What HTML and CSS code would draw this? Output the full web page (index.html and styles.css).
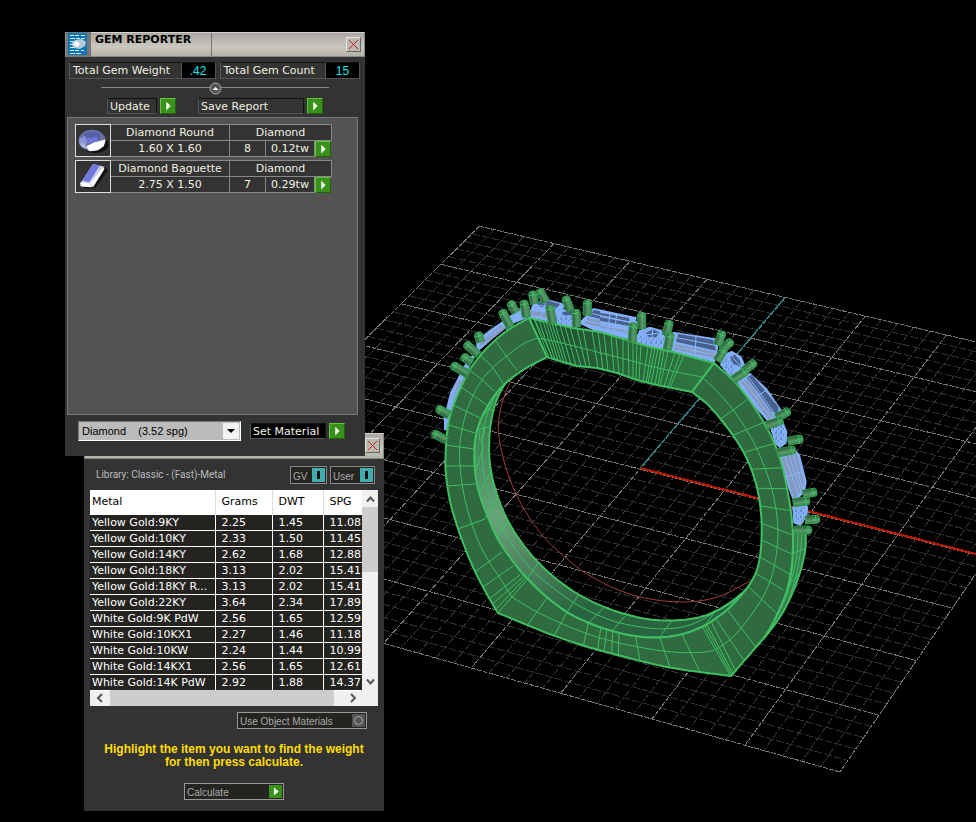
FILE: index.html
```html
<!DOCTYPE html>
<html lang="en">
<head>
<meta charset="utf-8">
<title>Gem Reporter</title>
<link rel="stylesheet" href="styles.css">
</head>
<body>
<main class="desktop">
<svg class="viewport" viewBox="0 0 976 822" preserveAspectRatio="xMinYMin meet" role="img" aria-label="Ring model in perspective view">
  <defs>
    <linearGradient id="metal" x1="0" y1="0" x2="0" y2="1"><stop offset="0" stop-color="#34834a"/><stop offset=".4" stop-color="#5b9a6d"/><stop offset="1" stop-color="#245a35"/></linearGradient>
    <linearGradient id="shine" gradientUnits="userSpaceOnUse" x1="485" y1="400" x2="580" y2="610"><stop offset="0" stop-color="#34794a"/><stop offset=".33" stop-color="#55966a"/><stop offset=".48" stop-color="#6aa37a"/><stop offset=".75" stop-color="#4b7f5b"/><stop offset="1" stop-color="#2a6340"/></linearGradient>
    <linearGradient id="band" gradientUnits="userSpaceOnUse" x1="530" y1="340" x2="710" y2="370"><stop offset="0" stop-color="#214b2f"/><stop offset="1" stop-color="#2f7942"/></linearGradient>
    <pattern id="facets" width="5" height="6" patternUnits="userSpaceOnUse"><path d="M0 1h2M3 3h1M1 5h1" stroke="#506b9b" stroke-width="1"/></pattern>
  </defs>
  <g id="grid" class="grid"></g>
  <path class="axis-y" d="M640 468L785 297"/>
  <path class="axis-x" d="M640 468L976 554"/>
  <path id="finger" class="finger"/>
  <g id="gems" class="gems"></g>
  <g id="ring" class="ring"></g>
  <g id="prongs"></g>
</svg>

<section class="window weights" aria-label="Metal weights">
  <header class="titlebar titlebar-back"><span class="title-gap"></span><button class="close" type="button" aria-label="Close"><svg viewBox="0 0 13 13"><path d="M2 2L11 11M11 2L2 11"/></svg></button></header>
  <div class="weights-body">
    <div class="library">
      <span class="library-name">Library: Classic - (Fast)-Metal</span>
      <button class="toggle" type="button">GV<i class="on"></i></button>
      <button class="toggle" type="button">User<i class="on"></i></button>
    </div>
    <div class="list">
      <div class="list-main">
        <table>
          <colgroup><col class="c1"><col class="c2"><col class="c3"><col class="c4"></colgroup>
          <thead><tr><th>Metal</th><th>Grams</th><th>DWT</th><th>SPG</th></tr></thead>
          <tbody>
            <tr><td>Yellow Gold:9KY</td><td>2.25</td><td>1.45</td><td>11.08</td></tr>
            <tr><td>Yellow Gold:10KY</td><td>2.33</td><td>1.50</td><td>11.45</td></tr>
            <tr><td>Yellow Gold:14KY</td><td>2.62</td><td>1.68</td><td>12.88</td></tr>
            <tr><td>Yellow Gold:18KY</td><td>3.13</td><td>2.02</td><td>15.41</td></tr>
            <tr><td>Yellow Gold:18KY R...</td><td>3.13</td><td>2.02</td><td>15.41</td></tr>
            <tr><td>Yellow Gold:22KY</td><td>3.64</td><td>2.34</td><td>17.89</td></tr>
            <tr><td>White Gold:9K PdW</td><td>2.56</td><td>1.65</td><td>12.59</td></tr>
            <tr><td>White Gold:10KX1</td><td>2.27</td><td>1.46</td><td>11.18</td></tr>
            <tr><td>White Gold:10KW</td><td>2.24</td><td>1.44</td><td>10.99</td></tr>
            <tr><td>White Gold:14KX1</td><td>2.56</td><td>1.65</td><td>12.61</td></tr>
            <tr><td>White Gold:14K PdW</td><td>2.92</td><td>1.88</td><td>14.37</td></tr>
          </tbody>
        </table>
        <div class="vbar"><svg viewBox="0 0 16 16"><path d="M5 11L8.500 7L12 11"/></svg><span class="vthumb"></span><svg viewBox="0 0 16 16"><path d="M5 6L8.500 10L12 6"/></svg></div>
      </div>
      <div class="hbar"><svg viewBox="0 0 16 16"><path d="M10 4L6 8L10 12"/></svg><span class="hthumb"></span><svg viewBox="0 0 16 16"><path d="M6 4L10 8L6 12"/></svg></div>
    </div>
    <button class="outlined materials" type="button"><span>Use Object Materials</span><i class="off"></i></button>
    <p class="hint">Highlight the item you want to find the weight<br>for then press calculate.</p>
    <button class="outlined calculate" type="button"><span>Calculate</span><i class="play"><svg viewBox="0 0 16 16"><path d="M6 3L12 8L6 13Z"/></svg></i></button>
  </div>
</section>

<section class="window reporter" aria-label="Gem reporter">
  <header class="titlebar">
    <svg class="logo" viewBox="0 0 25 25"><path fill="#777" d="M0 0h25v25H0z"/><path fill="#0d77b4" d="M2 1h19v22H2z"/><path d="M4 3.500h4m1 0h4m2 0h4M4 6.500h5m1 0h4m1 0h4M4 9.500h4M4 12.500h3M4 15.500h5M4 18.500h4m1 0h4m2 0h3M4 21.500h5m1 0h5" stroke="#d8eef8" stroke-width="1"/><path d="M5 12L9 8L16 7L20 10L19 14L14 17L8 16Z" fill="#b7cad8"/><path d="M7 12L11 9L14 12L11 15Z" fill="#fff"/></svg>
    <h1>GEM REPORTER</h1>
    <span class="title-gap"></span>
    <button class="close" type="button" aria-label="Close"><svg viewBox="0 0 13 13"><path d="M2 2L11 11M11 2L2 11"/></svg></button>
  </header>
  <div class="totals">
    <div class="total"><span>Total Gem Weight</span><output>.42</output></div>
    <div class="total"><span>Total Gem Count</span><output>15</output></div>
  </div>
  <div class="divider"><button class="collapse" type="button" aria-label="Collapse"><svg viewBox="0 0 13 13"><circle cx="6.500" cy="6.500" r="5.500" fill="#555" stroke="#aaa"/><path d="M3.500 8L6.500 5L9.500 8Z" fill="#fff"/></svg></button></div>
  <div class="actions">
    <button class="action update" type="button"><span>Update</span><i class="play"><svg viewBox="0 0 16 16"><path d="M6 3L11 8L6 13Z"/></svg></i></button>
    <button class="action save" type="button"><span>Save Report</span><i class="play"><svg viewBox="0 0 16 16"><path d="M6 3L11 8L6 13Z"/></svg></i></button>
  </div>
  <div class="gem-list">
    <article class="gem">
      <svg class="thumb" viewBox="0 0 34 32"><ellipse cx="19" cy="20" rx="14" ry="9" fill="#111"/><ellipse cx="16" cy="16" rx="14" ry="11" fill="#6a70a0"/><ellipse cx="16" cy="12" rx="9" ry="5" fill="#565fa8"/><path d="M3 14L9 11L11 18L8 24L3 19Z" fill="#8d95d8"/><path d="M9 14L22 12L21 17L12 19Z" fill="#6f77dd"/><path d="M3 19L8 19L11 25L6 23Z" fill="#a9b3dd"/><path d="M10 22L18 18L30 15L28 22L22 26L13 27Z" fill="#fff"/></svg>
      <span class="name">Diamond Round</span><span class="kind">Diamond</span>
      <span class="size">1.60 X 1.60</span><span class="count">8</span><span class="tw">0.12tw</span>
      <button class="play" type="button" aria-label="Open Diamond Round"><svg viewBox="0 0 16 16"><path d="M6 3L11 8L6 13Z"/></svg></button>
    </article>
    <article class="gem">
      <svg class="thumb" viewBox="0 0 34 32"><path d="M8 28L19 28L32 10L29 6Z" fill="#111"/><path d="M4 23L17 3L29 6L16 27L5 26Z" fill="#c9cdea"/><path d="M6 20L17 3L24 5L13 22Z" fill="#7078dd"/><path d="M14 23L27 7L29 8L17 27Z" fill="#fff"/><path d="M4 22L13 23L15 27L4 26Z" fill="#fff"/></svg>
      <span class="name">Diamond Baguette</span><span class="kind">Diamond</span>
      <span class="size">2.75 X 1.50</span><span class="count">7</span><span class="tw">0.29tw</span>
      <button class="play" type="button" aria-label="Open Diamond Baguette"><svg viewBox="0 0 16 16"><path d="M6 3L11 8L6 13Z"/></svg></button>
    </article>
  </div>
  <div class="material">
    <div class="picker"><select aria-label="Material"><option>Diamond &nbsp;&nbsp; (3.52 spg)</option></select><i><svg viewBox="0 0 16 16"><path d="M4 6H12L8 10Z"/></svg></i></div>
    <button class="action set" type="button"><span>Set Material</span><i class="play"><svg viewBox="0 0 16 16"><path d="M6 3L11 8L6 13Z"/></svg></i></button>
  </div>
</section>
</main>
<script src="scene.js"></script>
</body>
</html>
```

FILE: styles.css
```css
* { box-sizing: border-box; }
body { margin: 0; background: #000; color: #f0f0e0; font: 11px/14px "DejaVu Sans", sans-serif; }
button { margin: 0; padding: 0; border: 0; background: none; color: inherit; font: inherit; text-align: left; }
i { font-style: normal; }
svg { display: block; }
.desktop { position: relative; min-height: 100vh; overflow: hidden; }
.viewport { position: absolute; inset: 0; width: 100%; height: 100vh; }
.grid path { fill: none; stroke: #303030; shape-rendering: crispEdges; stroke-dasharray: 8 2; }
.grid .major { stroke: #787878; stroke-dasharray: 5 1; }
.axis-y, .axis-x, .finger { fill: none; }
.axis-y { stroke: #0a9aa0; stroke-width: 1; }
.axis-x { stroke: #c01800; stroke-width: 2; shape-rendering: crispEdges; }
.finger { stroke: #a23c3c; }
.ring path { stroke: #3fbe62; fill: none; stroke-width: 1; stroke-linejoin: round; }
.ring .edge { stroke-width: 2; }
.ring .face { fill: #2f6b3f; fill-rule: evenodd; }
.ring .shine { fill: url(#shine); }
.ring .band { fill: url(#band); }
.ring .side { fill: #398050; }
.ring .dark { fill: #1d3e28; }
.gems .stone { fill: #82aff5; }
.gems .table { fill: #48608c; }
.gems .pavilion { fill: #8499bd; }
.gems .rough { fill: url(#facets); }
.gems .wire { fill: none; stroke: #8ab6ff; stroke-width: 1; }

.window { position: absolute; width: 300px; background: #333; }
.reporter { left: 65px; top: 32px; min-height: 424px; }
.weights { left: 84px; top: 433px; min-height: 378px; }
.titlebar { display: flex; height: 25px; border: 1px solid #8a8880; border-top-color: #d5d3cc; background: linear-gradient(#aaa8a2, #cbc8c0 60%, #b5b2aa); padding-right: 3px; align-items: center; }
.titlebar-back { height: 26px; padding-bottom: 2px; }
.logo { width: 25px; height: 25px; flex: none; }
h1 { margin: 0; align-self: flex-start; width: 121px; height: 23px; padding-left: 4px; border-right: 1px solid #77756f; color: #000; font: bold 11px/13px "DejaVu Sans", sans-serif; white-space: nowrap; }
.title-gap { flex: 1; }
.close { flex: none; width: 15px; height: 15px; border: 1px solid; border-color: #e4e4e0 #666 #666 #e4e4e0; background: #bbb8b0; }
.close svg { width: 13px; height: 13px; }
.close path { stroke: #d01825; fill: none; }
.totals { display: flex; gap: 4px; padding: 5px 5px 0 4px; }
.total { display: flex; height: 17px; border: 1px solid #555; border-top-color: #111; flex: 1 1 146px; }
.total + .total { flex-basis: 140px; }
.total span { flex: 1; padding-left: 3px; line-height: 15px; white-space: nowrap; }
.total output { width: 34px; border-left: 1px solid #555; background: #000; color: #18e4ea; text-align: center; font: 12px/16px "Liberation Sans", sans-serif; }
.divider { display: flex; height: 16px; margin: 1px 36px 0; justify-content: center; align-items: center; background: linear-gradient(#888, #888) 0 7px / 100% 1px no-repeat; }
.collapse svg { width: 13px; height: 13px; }
.actions { display: flex; gap: 22px; padding: 2px 42px 0; }
.action { display: flex; gap: 3px; height: 16px; }
.action span { flex: 1; height: 16px; padding-left: 2px; border: 1px solid #111; border-bottom-color: #555; border-left-color: #555; line-height: 15px; white-space: nowrap; }
.update { width: 69px; }
.save { width: 125px; }
.play { flex: none; width: 16px; height: 16px; border: 1px solid; border-color: #63c33a #245f0d #245f0d #63c33a; background: #39901a; }
.play svg { width: 14px; height: 14px; }
.play path { fill: #f4fff0; }
.gem-list { display: flex; flex-direction: column; gap: 3px; min-height: 298px; margin: 3px 7px 0 2px; padding: 6px 7px; border: 1px solid #777; background: #535353; }
.gem { display: grid; grid-template-columns: 36px 119px 36px 49px 17px; grid-template-rows: 17px 16px; width: 257px; text-align: center; }
.gem > span { border: 1px solid #888; border-left: 0; background: #333; line-height: 15px; }
.thumb { grid-row: 1 / 3; width: 36px; height: 33px; border: 1px solid #ddd; background: #333; }
.gem .kind { grid-column: 3 / 6; }
.gem .size, .gem .count, .gem .tw { border-top: 0; }
.material { display: flex; gap: 9px; padding: 6px 13px; align-items: center; }
.picker { display: flex; width: 163px; height: 20px; border: 1px solid #777; border-right-color: #fff; border-bottom-color: #fff; background: #bbb; color: #000; }
.picker select { appearance: none; flex: 1; min-width: 0; border: 0; padding: 0 3px; background: none; color: #000; font: 11px "Liberation Sans", sans-serif; }
.picker i { width: 16px; height: 16px; margin: 1px; background: #f2f2f2; }
.set { width: 95px; }
.set span { background: #000; }

.weights-body { display: flex; flex-direction: column; padding: 7px 6px 0 6px; }
.library { display: flex; gap: 3px; height: 18px; padding: 0 3px 0 6px; color: #bbb; }
.library-name { flex: 1; white-space: nowrap; font: 10px/18px Roboto, sans-serif; }
.toggle { display: flex; height: 18px; padding: 1px 1px 0 2px; border: 1px solid #888; background: #252420; color: #aaa; font: 10px/17px "Liberation Sans", sans-serif; justify-content: space-between; width: 37px; }
.toggle + .toggle { width: 45px; }
.on { display: grid; width: 13px; height: 14px; background: #40acae; place-items: center; }
.on::after { content: ""; width: 3px; height: 8px; background: #111; }
.list { margin-top: 6px; height: 216px; background: #fff; color: #fff; font: 11px/15px "DejaVu Sans", sans-serif; }
.list-main { display: flex; height: 200px; }
table { flex: 1; width: 272px; table-layout: fixed; border-collapse: collapse; }
.c1 { width: 125px; } .c2 { width: 57px; } .c3 { width: 51px; } .c4 { width: 39px; }
th { height: 24px; padding: 0 0 0 6px; border-right: 1px solid #ddd; color: #000; font-weight: normal; text-align: left; }
td { height: 16px; padding: 0 0 0 6px; border: 1px solid #fff; border-left: 0; background: #24231f; line-height: 15px; white-space: nowrap; overflow: hidden; }
th:first-child, td:first-child { padding-left: 2px; }
th:last-child, td:last-child { border-right: 0; }
.vbar { display: flex; flex-direction: column; width: 16px; background: #f0f0f0; }
.vbar svg { width: 16px; height: 17px; }
.vthumb { height: 65px; background: #cdcdcd; }
.vbar svg:last-child { margin-top: auto; }
.hbar { display: flex; height: 16px; background: #f0f0f0; }
.hbar svg { width: 20px; height: 16px; }
.hthumb { width: 224px; background: #cdcdcd; }
.hbar svg:last-child { margin-left: 9px; }
.vbar path, .hbar path { fill: none; stroke: #555; stroke-width: 2; }
.outlined { display: flex; height: 17px; padding: 1px 1px 1px 2px; border: 1px solid #999; background: #252420; color: #aaa; font: 10px/15px "Liberation Sans", sans-serif; }
.outlined span { flex: 1; white-space: nowrap; }
.materials { align-self: flex-end; width: 130px; margin: 6px 11px 0 0; }
.off { display: grid; width: 13px; height: 13px; background: #555; place-items: center; }
.off::after { content: ""; width: 7px; height: 7px; border: 1px solid #aaa; border-radius: 50%; }
.hint { margin: 14px 0; color: #fd0; text-align: center; font: bold 12px/13px "Liberation Sans", sans-serif; }
.calculate { align-self: center; width: 100px; }
.calculate .play { width: 13px; height: 13px; border: 0; }
.calculate .play svg { width: 13px; height: 13px; }
```

FILE: scene.js
```js
const NS = "http://www.w3.org/2000/svg";
function add(parent, d, cls) {
  const p = document.createElementNS(NS, "path");
  p.setAttribute("d", d);
  if (cls) p.setAttribute("class", cls);
  parent.appendChild(p);
  return p;
}
const line = pts => "M" + pts.map(p => p[0].toFixed(1) + " " + p[1].toFixed(1)).join("L");
const parse = s => s.trim().split(/\s+/).map(p => p.split(",").map(Number));
// view regions: points given at three times scale from a region's corner
const regions = { a: [430, 280], b: [600, 290], c: [430, 440], d: [600, 540] };
const from = (r, s) => parse(s).map(p => [regions[r][0] + p[0] / 3, regions[r][1] + p[1] / 3]);

// Catmull-Rom curve over averaged control points; the end points stay fixed
function smooth(s) {
  const q = typeof s === "string" ? parse(s) : s;
  if (q.length < 3) return q;
  const p = q.map((c, i) => i === 0 || i === q.length - 1 ? c
    : [0, 1].map(k => c[k] * 0.7 + (q[i - 1][k] + q[i + 1][k]) * 0.15));
  const out = [];
  for (let i = 0; i < p.length - 1; i++) {
    const a = p[i - 1] || p[i], b = p[i], c = p[i + 1], d = p[i + 2] || c;
    for (let t = 0; t < 1; t += 0.2)
      out.push([0, 1].map(k => 0.5 * (2 * b[k] + (c[k] - a[k]) * t + (2 * a[k] - 5 * b[k] + 4 * c[k] - d[k]) * t * t + (3 * b[k] - a[k] - 3 * c[k] + d[k]) * t * t * t)));
  }
  out.push(p[p.length - 1]);
  return out;
}

// perspective floor grid
function homography(src, dst) {
  const m = [];
  src.forEach(([u, v], i) => {
    const [x, y] = dst[i];
    m.push([u, v, 1, 0, 0, 0, -u * x, -v * x, x]);
    m.push([0, 0, 0, u, v, 1, -u * y, -v * y, y]);
  });
  for (let i = 0; i < 8; i++) {
    let k = i;
    for (let j = i; j < 8; j++) if (Math.abs(m[j][i]) > Math.abs(m[k][i])) k = j;
    [m[i], m[k]] = [m[k], m[i]];
    for (let j = 0; j < 8; j++) if (j !== i) {
      const f = m[j][i] / m[i][i];
      for (let c = i; c < 9; c++) m[j][c] -= f * m[i][c];
    }
  }
  const h = m.map((r, i) => r[8] / r[i]);
  return (u, v) => {
    const w = h[6] * u + h[7] * v + 1;
    return [(h[0] * u + h[1] * v + h[2]) / w, (h[3] * u + h[4] * v + h[5]) / w];
  };
}
const floor = homography([[0, 0], [4, 0], [4, 8], [8, 8]], [[479.4, 226.2], [785.5, 297.5], [471.3, 668], [840, 772]]);
const grid = document.getElementById("grid");
for (const major of [false, true])
  for (let i = 0; i <= 40; i++) {
    if ((i % 5 === 0) !== major) continue;
    add(grid, line([floor(i / 5, 0), floor(i / 5, 8)]), major ? "major" : "");
    add(grid, line([floor(0, i / 5), floor(8, i / 5)]), major ? "major" : "");
  }
document.getElementById("finger").setAttribute("d", line(smooth("513,376 505,393 500,410 498,427 499,440 505,467 515,493 526,513 540,533 552,546 565,557 580,570 597,580 613,588 637,597 667,602 700,602 723,596 750,581")));

// stones
const gems = document.getElementById("gems");
[
  ["a", "stone", "138,180 250,100 275,80 300,80 290,115 240,135 190,175 140,218"],
  ["a", "pavilion", "150,185 215,135 225,145 150,200"],
  ["a", "stone", "118,228 135,228 100,300 60,400 55,450 42,450 42,410 60,340 85,290"],
  ["a", "pavilion", "88,300 95,305 62,370 55,390"],
  ["a", "stone", "292,112 310,70 350,58 405,72 395,105 380,130"],
  ["a", "table", "318,70 345,60 390,72 378,88 330,80"],
  ["a", "pavilion", "300,92 355,98 380,105 375,118 300,105"],
  ["a", "stone", "375,115 385,95 410,85 440,98 450,120 440,145 380,135"],
  ["a", "table", "395,98 420,90 440,98 425,106 400,106"],
  ["a", "rough", "375,108 440,108 440,135 380,130"],
  ["a", "stone", "445,130 490,84 620,112 605,180 500,155"],
  ["a", "table", "492,90 600,112 600,138 475,108"],
  ["a", "pavilion", "474,114 597,140 597,158 462,130"],
  ["b", "stone", "0,60 100,82 115,100 90,145 0,125"],
  ["b", "table", "0,68 88,84 88,108 0,92"],
  ["b", "pavilion", "0,100 90,118 85,128 0,112"],
  ["b", "stone", "107,145 118,120 150,110 185,120 200,150 190,178 150,175 115,165"],
  ["b", "table", "138,128 160,118 178,128 168,142 145,140"],
  ["b", "rough", "112,138 195,145 190,170 120,158"],
  ["b", "stone", "205,185 218,125 345,145 355,170 345,217 250,195"],
  ["b", "table", "235,132 340,150 348,182 228,155"],
  ["b", "pavilion", "225,162 345,187 345,203 220,178"],
  ["b", "stone", "360,225 370,195 395,182 425,200 437,230 420,260 400,270"],
  ["b", "table", "390,200 405,194 420,212 422,230 400,222"],
  ["b", "rough", "365,205 390,205 410,250 395,255 368,225"],
  ["b", "stone", "410,275 450,248 500,295 545,360 540,375 510,402 445,330"],
  ["b", "table", "440,262 455,254 535,350 535,372 515,365"],
  ["b", "pavilion", "422,275 440,268 520,378 508,390"],
  ["b", "stone", "508,405 545,385 562,425 560,460 540,475 525,462"],
  ["b", "rough", "515,415 555,400 555,450 530,460"],
  ["b", "stone", "537,495 580,470 600,495 620,575 615,605 582,640 565,595"],
  ["b", "pavilion", "545,505 590,490 612,580 608,598 582,628"],
  ["b", "stone", "577,650 600,630 625,650 622,680 600,707 580,700"],
  ["b", "rough", "582,655 615,650 615,690 590,695"]
].forEach(([r, c, s]) => add(gems, line(from(r, s)) + "Z", c));
[
  ["a", "540,100 532,166"], ["a", "483,100 600,127"], ["a", "468,122 600,149"], ["b", "288,138 285,205"], ["b", "232,143 345,166"], ["b", "222,170 345,195"],
  ["b", "0,80 90,96"], ["b", "0,106 90,123"], ["b", "50,72 45,115"], ["b", "445,260 525,372"], ["b", "430,272 514,384"], ["b", "470,320 500,300"],
  ["b", "555,500 595,612"], ["b", "567,495 603,605"], ["b", "580,492 608,598"], ["b", "560,560 605,545"],
  ["a", "145,192 220,140"], ["a", "350,60 330,115"], ["a", "320,75 385,85"], ["b", "140,134 175,130"], ["b", "158,118 156,142"], ["b", "395,198 420,228"]
].forEach(([r, s]) => add(gems, line(from(r, s)), "wire"));

// ring faces
const outerLeft = smooth("529,318 510,328 495,340 480,355 469,370 461,387 453,405 448,423 446,443 445,467 447,485 451,507 458,529 466,551 475,572 486,593 498,613");
const bottom = smooth("498,613 527,625 554,636 584,646 610,653 640,661 670,668 700,672 731,676");
const outerRight = smooth("731,676 744,661 756,647 768,633 777,615 787,593 792,567 793,550 793,530 791,510 787,488 783,468 775,443 763,420 748,398 735,381 714,363");
const innerRim = smooth("692,392 707,403 720,418 733,435 744,452 752,470 758,490 761,510 762,530 761,553 757,572 748,588 730,608 717,618 703,627 682,635 660,638 635,637 607,630 588,623 567,613 547,598 527,579 513,562 498,541 488,518 480,497 475,477 474,453 475,437 480,420 488,405 498,390 510,379 527,367 547,357");
const backEdge = smooth("510,377 502,388 495,403 491,420 489,440 489,460 493,483 501,507 511,527 523,545 538,563 557,580 578,595 603,607 627,615 650,620 675,621 700,618 717,611 733,601 748,588");
const frontEdge = smooth("748,588 730,608 717,618 703,627 682,635 660,638 635,637 607,630 588,623 567,613 547,598 527,579 513,562 498,541 488,518 480,497 475,477 474,453 475,437 480,420 488,405 498,390 510,379");
const ring = document.getElementById("ring");
const solid = (pts, c) => add(ring, line(pts) + "Z", c);
solid(smooth("800,530 806,530 806,548 802,567 793,593 782,615 767,635 756,647").concat(parse("768,633 777,615 787,593 792,567 793,530")), "side edge");
solid(backEdge.concat(frontEdge), "shine edge");
const topEdge = parse("529,318 555,324 573,328 600,332 627,340 650,347 673,352 714,363");
const lowEdge = parse("547,357 563,362 577,366 597,368 617,373 637,380 657,385 692,392");
solid(topEdge.concat([...lowEdge].reverse()), "band edge");
solid(parse("529,318 547,357 553,359 535,320"), "dark");
solid([...outerLeft, ...bottom, ...outerRight, ...innerRim], "face edge");

// surface curves
const at = (pts, x) => {
  for (let i = 1; i < pts.length; i++)
    if (x <= pts[i][0]) {
      const [a, b] = [pts[i - 1], pts[i]];
      return [x, a[1] + (b[1] - a[1]) * (x - a[0]) / (b[0] - a[0])];
    }
  return pts[pts.length - 1];
};
[[534, 549], [539, 552], [543, 555], [546, 558], [549, 561], [552, 564], [555, 567], [560, 571], [565, 576], [570, 581], [577, 586], [583, 590], [592, 598], [598, 603], [604, 608], [611, 614], [616, 619], [623, 623], [628, 629], [633, 633], [637, 636], [641, 639], [648, 643], [652, 646], [655, 648], [658, 651], [661, 655], [664, 658], [668, 660], [675, 664], [680, 668], [684, 670]]
  .forEach(([t, b]) => add(ring, line([at(topEdge, t), at(lowEdge, b)])));
[
  "538,338 563,343 597,352 633,361 660,369 702,377",
  "538,338 525,342 506,356 493,367 482,379 473,395 466,412 462,429 459,447 460,467 462,485 466,505 471,522 479,544 489,562 500,578 512,597",
  "512,597 536,612 560,623 587,634 610,641 637,647 667,652 692,653 713,652 728,642 742,628 762,600 770,583 776,560 778,540 778,525 776,508 772,488 765,468 757,448 747,430 733,409 718,392 702,377",
  "498,391 488,410 483,430 482,450 483,473 490,503 503,530 517,552 533,572 553,588 573,603 597,615 617,623 650,629 673,629 693,625 713,613 733,603 748,588",
  "495,340 506,356 517,370", "480,355 493,367 503,383", "469,370 482,379 494,391", "461,387 487,405", "453,405 480,418", "449,425 475,433", "446,445 474,449", "445,466 474,466", "447,486 475,484", "458,529 485,519", "475,572 502,552", "483,587 513,566",
  "798,530 798,548 795,567 788,593 776,618", "802,530 801,550 797,575 788,602", "793,553 806,548", "789,585 800,573"
].forEach(s => add(ring, line(smooth(s))));
[
  ["c", "180,475 270,405"], ["c", "190,490 280,410"], ["c", "200,505 285,415"], ["c", "205,518 290,420"],
  ["c", "292,556 350,475"], ["c", "372,588 410,518"], ["c", "460,618 475,550"], ["c", "503,628 512,565"], ["c", "522,632 530,572"], ["c", "545,640 548,575"], ["c", "565,645 567,580"],
  ["d", "120,363 107,292"], ["d", "210,383 180,293"], ["d", "300,397 247,285"], ["d", "390,405 308,262"], ["d", "395,405 315,258"], ["d", "400,402 322,255"], ["d", "408,395 335,248"], ["d", "433,363 350,240"], ["d", "468,322 385,213"], ["d", "530,220 445,140"], ["d", "550,150 465,98"], ["d", "573,105 482,52"], ["d", "575,42 485,0"],
  ["b", "483,648 573,662"], ["b", "475,595 562,596"], ["b", "455,538 548,533"], ["b", "433,487 525,460"], ["b", "400,435 490,398"], ["b", "362,387 440,330"], ["b", "485,700 578,735"],
  ["c", "290,418 325,368"], ["c", "410,518 445,465"], ["c", "200,300 235,240"], ["c", "165,235 205,165"], ["c", "145,165 183,95"], ["c", "475,550 520,505"], ["c", "547,572 585,528"], ["c", "137,95 160,20 150,0"], ["d", "180,290 215,243"], ["d", "310,262 345,215"],
  ["a", "150,430 165,445 160,470 148,480 150,450"], ["a", "150,420 190,370"], ["a", "140,450 180,440"], ["a", "170,385 188,390"], ["a", "190,350 205,345"]
].forEach(([r, s]) => add(ring, line(from(r, s))));

// prongs: tip then base
const prongs = document.getElementById("prongs");
const prong = (r, s) => {
  const [[x1, y1], [x2, y2]] = from(r, s);
  const len = Math.hypot(x2 - x1, y2 - y1) + 2, ang = Math.atan2(y2 - y1, x2 - x1) * 180 / Math.PI;
  const g = document.createElementNS(NS, "g");
  g.setAttribute("transform", `translate(${x1.toFixed(1)} ${y1.toFixed(1)}) rotate(${ang.toFixed(0)})`);
  g.innerHTML = `<path d="M0 -4H${len}V4H0Q-3 4 -3 0T0 -4Z" fill="url(#metal)" stroke="#2f9a4c" stroke-width="1"/><path d="M1 -4V4M-2 0H3" fill="none" stroke="#3fbe62" stroke-width="1"/>`;
  prongs.appendChild(g);
};
"308,42 312,65|330,35 345,60|243,72 255,92|282,70 288,105|218,98 238,135|145,165 150,180|112,195 140,220|103,232 120,245|72,258 110,280|28,388 52,402|15,463 45,478|408,57 418,85|360,85 367,125|472,68 472,100|438,97 440,135".split("|").forEach(s => prong("a", s));
"125,75 125,110|100,107 97,150|207,100 200,130|210,137 203,172|365,132 355,160|390,157 370,175|370,182 355,207|460,220 435,240|435,245 405,265|562,365 535,380|540,392 505,405|600,447 570,453|578,480 537,488|642,607 615,612|620,633 585,637|650,688 622,690|627,720 590,720".split("|").forEach(s => prong("b", s));
```
